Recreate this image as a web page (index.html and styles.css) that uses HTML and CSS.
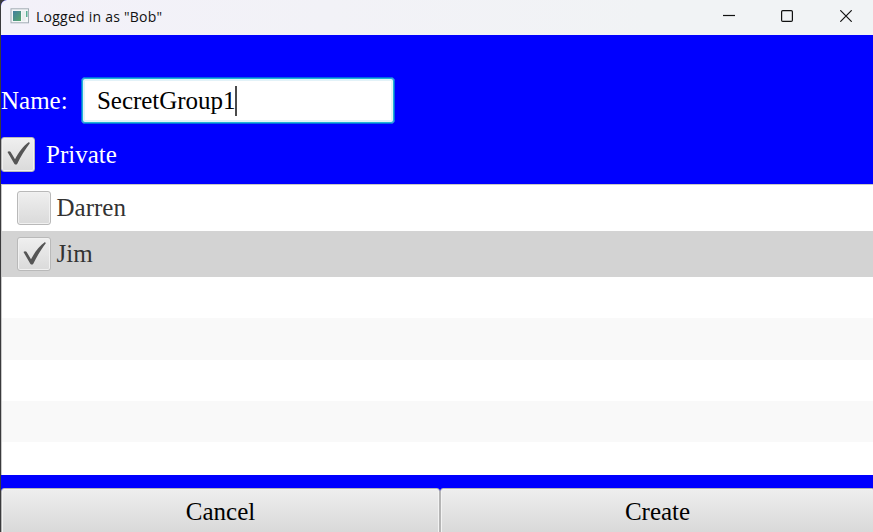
FILE: index.html
```html
<!DOCTYPE html>
<html lang="en">
<head>
<meta charset="utf-8">
<title>Logged in as "Bob"</title>
<link rel="stylesheet" href="styles.css">
</head>
<body>
<div class="window">
  <header class="titlebar">
    <svg class="app-icon" width="19" height="16" viewBox="0 0 19 16">
      <defs><linearGradient id="pane" x1="0" y1="0" x2="1" y2="1"><stop offset="0" stop-color="#427f9f"/><stop offset="1" stop-color="#57a86d"/></linearGradient></defs>
      <rect x="1" y=".8" width="17.500" height="14" fill="#f5f7f8" stroke="#a3adb5"/>
      <rect x="3" y="3" width="8" height="10" fill="url(#pane)"/>
      <rect x="12" y="3" width="3.500" height="10" fill="#e9eeee"/>
      <rect x="16" y="3" width="1.5" height="6" fill="#5aaf94"/>
    </svg>
    <span class="title">Logged in as "Bob"</span>
    <div class="controls">
      <svg width="12" height="12" viewBox="0 0 12 12"><path d="M0 5.5H12"/></svg>
      <svg width="12" height="12" viewBox="0 0 12 12"><rect x=".6" y=".6" width="10.8" height="10.8" rx="1.2"/></svg>
      <svg width="12" height="12" viewBox="0 0 12 12"><path d="M.3.3 11.7 11.7M11.7.3.3 11.7"/></svg>
    </div>
  </header>
  <main class="form">
    <div class="name-row">
      <span class="label">Name:</span>
      <div class="field"><span class="value">SecretGroup1</span><i class="caret"></i></div>
    </div>
    <div class="private-row">
      <span class="box"><svg width="34" height="34" viewBox="0 0 34 34"><path d="M6.500 15Q8 13.400 9.500 14.800L14 22.300C17.500 15.500 22.500 8.500 28 5L28.800 6.200C24 12.500 19.500 20 16.300 26.700Q14.800 28.500 13.300 26.700Z"/></svg></span>
      <span class="label">Private</span>
    </div>
    <ul class="list">
      <li class="item"><span class="box"></span><span>Darren</span></li>
      <li class="item selected"><span class="box"><svg width="34" height="34" viewBox="0 0 34 34"><path d="M6.500 15Q8 13.400 9.500 14.800L14 22.300C17.500 15.500 22.500 8.500 28 5L28.800 6.200C24 12.500 19.500 20 16.300 26.700Q14.800 28.500 13.300 26.700Z"/></svg></span><span>Jim</span></li>
      <li class="empty"></li>
      <li class="empty odd"></li>
      <li class="empty"></li>
      <li class="empty odd"></li>
    </ul>
    <div class="actions">
      <button class="button">Cancel</button>
      <button class="button">Create</button>
    </div>
  </main>
</div>
</body>
</html>
```
FILE: styles.css
```css
* { box-sizing: border-box; }
body { margin: 0; background: #3a3a3c; overflow: hidden; }
.window {
  width: 872px; height: 532px; margin-left: 1px;
  display: flex; flex-direction: column;
  border-top-left-radius: 6px; overflow: hidden;
  background: #00f;
  font: 25px/30px "Liberation Serif", serif;
}
.titlebar {
  height: 35px; flex: none; display: flex; align-items: center;
  padding: 0 21px 0 9px;
  background: linear-gradient(90deg, #f3f1f9, #f1f3f5 75%);
}
.app-icon { margin-top: -3px; }
.title { margin-left: 7px; font: 14px/20px "Open Sans", sans-serif; letter-spacing: 0.24px; color: #111; margin-top: -2px; }
.controls { display: flex; gap: 47px; margin: -3px 0 0 auto; }
.controls svg { fill: none; stroke: #111; stroke-width: 1.2; }
.controls svg:first-child { margin-right: -1px; }
.form { flex: 1; display: flex; flex-direction: column; padding-top: 42px; }
.name-row { display: flex; align-items: center; height: 47px; color: #fff; }
.name-row .label { width: 80px; }
.field {
  width: 314px; height: 47px; display: flex; align-items: center;
  padding-left: 15px; background: #fff; color: #000;
  border: 1px solid #0569e0; border-radius: 4px;
  box-shadow: inset 0 0 0 1px #1fb4d6, inset 0 0 0 3px #e2f2f8;
}
.value { letter-spacing: -0.03px; }
.caret { width: 1.5px; height: 30px; background: #4a4a4a; }
.private-row { display: flex; align-items: center; gap: 11px; margin-top: 13px; height: 35px; color: #fff; }
.box {
  width: 34px; height: 34px; flex: none; display: block;
  border: 1px solid #b9b9b9; border-radius: 3px;
  background: linear-gradient(#efefef, #dadada);
  box-shadow: inset 0 0 0 1px #f1f1f1;
}
.private-row .box { height: 35px; }
.box svg { display: block; margin: -1px; fill: #555; }
.list {
  list-style: none; margin: 12px 0 0; padding: 0; height: 291px; flex: none;
  background: #fff; border-top: 1px solid #c8c8c8; border-left: 1px solid #c8c8c8;
  color: #333;
}
.item { display: flex; align-items: center; gap: 5.5px; height: 46px; padding-left: 15px; }
.selected { background: #d3d3d3; }
.empty { height: 41.3px; }
.odd { background: #f9f9f9; }
.actions { display: flex; margin-top: 13px; height: 50px; flex: none; }
.button {
  flex: none; width: 439px; height: 50px; padding: 0 0 3px;
  border: 1px solid #b5b5b5; border-radius: 3px;
  background: linear-gradient(#eee, #d6d6d6);
  box-shadow: inset 0 0 0 1px #f3f3f3;
  font: inherit; color: #000;
}
.button + .button { width: 435px; }
```
